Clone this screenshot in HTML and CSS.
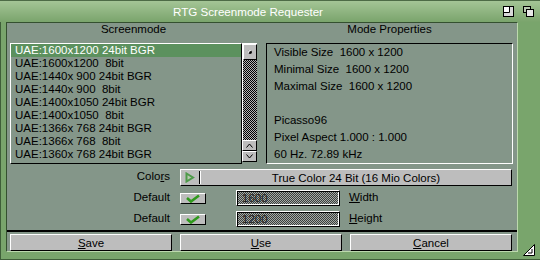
FILE: index.html
```html
<!DOCTYPE html>
<html lang="en">
<head>
  <meta charset="UTF-8" />
  <title>RTG Screenmode Requester</title>
  <link rel="stylesheet" href="styles.css">
</head>
<body>
  <div class="window">
    <div class="titlebar">
      <div class="title">RTG Screenmode Requester</div>
      <div class="gadgets">
        <svg class="gadget" width="11" height="11" viewBox="0 0 11 11">
          <rect x="0.5" y="0.5" width="10" height="10" fill="#d8d8d8" stroke="#000"/>
          <rect x="1" y="1" width="5" height="5" fill="#fff"/>
          <path d="M6.5 1 V6.5 H1" fill="none" stroke="#000"/>
        </svg>
        <svg class="gadget" width="11" height="11" viewBox="0 0 11 11">
          <rect x="0.5" y="0.5" width="7" height="6" fill="#b8c8b0" stroke="#000"/>
          <rect x="3.5" y="3.5" width="7" height="7" fill="#e8e8e8" stroke="#000"/>
        </svg>
      </div>
    </div>

    <div class="body">
      <div class="panes">
        <div class="pane">
          <div class="pane-title">Screenmode</div>
          <div class="listview">
            <ul class="list">
              <li class="selected">UAE:1600x1200 24bit BGR</li>
              <li>UAE:1600x1200  8bit</li>
              <li>UAE:1440x 900 24bit BGR</li>
              <li>UAE:1440x 900  8bit</li>
              <li>UAE:1400x1050 24bit BGR</li>
              <li>UAE:1400x1050  8bit</li>
              <li>UAE:1366x 768 24bit BGR</li>
              <li>UAE:1366x 768  8bit</li>
              <li>UAE:1360x 768 24bit BGR</li>
            </ul>
            <div class="scroller">
              <div class="track"><div class="knob"><span class="dot"></span></div></div>
              <div class="arrow">
                <svg width="7" height="5" viewBox="0 0 7 5"><path d="M0.5 4.5 L3.5 1 L6.5 4.5" fill="none" stroke="#000"/></svg>
              </div>
              <div class="arrow">
                <svg width="7" height="5" viewBox="0 0 7 5"><path d="M0.5 0.5 L3.5 4 L6.5 0.5" fill="none" stroke="#000"/></svg>
              </div>
            </div>
          </div>
        </div>
        <div class="pane">
          <div class="pane-title">Mode Properties</div>
          <div class="props">Visible Size  1600 x 1200
Minimal Size  1600 x 1200
Maximal Size  1600 x 1200

Picasso96
Pixel Aspect 1.000 : 1.000
60 Hz. 72.89 kHz</div>
        </div>
      </div>

      <div class="form">
        <div class="row row-colors">
          <span class="label">Colo<u>r</u>s</span>
          <div class="cycle">
            <span class="cycle-glyph">
              <svg width="10" height="11" viewBox="0 0 10 11"><path d="M1.5 1.5 L8 5.5 L1.5 9.5 Z" fill="#b8c8b0" stroke="#4f9a4a" stroke-width="2"/></svg>
            </span>
            <span class="cycle-text">True Color 24 Bit (16 Mio Colors)</span>
          </div>
        </div>
        <div class="row">
          <span class="label">Default</span>
          <div class="check">
            <svg width="16" height="9" viewBox="0 0 16 9"><path d="M2 4 L6 7.5 L14 1.5" fill="none" stroke="#2f9a1c" stroke-width="2.6"/></svg>
          </div>
          <div class="field">1600</div>
          <span class="label-after"><u>W</u>idth</span>
        </div>
        <div class="row">
          <span class="label">Default</span>
          <div class="check">
            <svg width="16" height="9" viewBox="0 0 16 9"><path d="M2 4 L6 7.5 L14 1.5" fill="none" stroke="#2f9a1c" stroke-width="2.6"/></svg>
          </div>
          <div class="field">1200</div>
          <span class="label-after"><u>H</u>eight</span>
        </div>
      </div>

      <div class="separator"></div>

      <div class="buttons">
        <button class="btn"><u>S</u>ave</button>
        <button class="btn"><u>U</u>se</button>
        <button class="btn"><u>C</u>ancel</button>
      </div>
    </div>

    <div class="rborder">
      <svg width="12" height="12" viewBox="0 0 12 12">
        <path d="M11.5 0.5 V11.5 H0.5 Z" fill="#fff" stroke="#000"/>
        <path d="M9 5 V9 H5" fill="none" stroke="#000"/>
      </svg>
    </div>
  </div>
</body>
</html>
```

FILE: styles.css
```css
* {
  box-sizing: border-box;
  margin: 0;
  padding: 0;
}
body {
  margin: 0;
  width: 540px;
  height: 260px;
  overflow: hidden;
  font-family: "Liberation Sans", Arial, sans-serif;
  font-size: 11.5px;
  color: #000;
}
.window {
  width: 540px;
  height: 260px;
  display: grid;
  grid-template-columns: 6px 512px 22px;
  grid-template-rows: 22px 230px 8px;
  background: #79a56c;
  box-shadow: inset 1px 0 0 #3f5e39, inset 0 -1px 0 #3f5e39;
}
.titlebar {
  grid-column: 1 / -1;
  display: flex;
  align-items: center;
  background: linear-gradient(#a4c596, #7aa46c);
  border-top: 1px solid #4d6b46;
}
.title {
  flex: 1;
  text-align: center;
  color: #fff;
  font-size: 11.6px;
}
.gadgets {
  width: 44px;
  display: flex;
  gap: 9px;
  padding-left: 7px;
}
.gadget {
  display: block;
}
.body {
  grid-column: 2;
  grid-row: 2;
  background: #849689;
  border-top: 1px solid #34502f;
  border-left: 1px solid #34502f;
  border-right: 1px solid #bcd9ad;
  border-bottom: 1px solid #bcd9ad;
  padding: 0 4px 0 3px;
  display: flex;
  flex-direction: column;
}
.rborder {
  grid-column: 3;
  grid-row: 2 / span 2;
  display: flex;
  align-items: flex-end;
  justify-content: center;
  padding-bottom: 4px;
}
.panes {
  display: grid;
  grid-template-columns: 247px 247px;
  column-gap: 9px;
}
.pane-title {
  text-align: center;
  line-height: 13px;
  margin-bottom: 7px;
}
.listview {
  display: flex;
  height: 121px;
}
.list {
  flex: 1;
  list-style: none;
  border-top: 1px solid #fff;
  border-left: 1px solid #fff;
  border-right: 1px solid #000;
  border-bottom: 1px solid #000;
}
.list li {
  height: 13px;
  line-height: 13px;
  padding-left: 4px;
  white-space: pre;
}
.list li.selected {
  background: #5c915e;
  color: #fff;
}
.scroller {
  width: 15px;
  display: flex;
  flex-direction: column;
  height: 119px;
}
.track {
  flex: 1;
  background: repeating-conic-gradient(#000 0 25%, #b4b4b4 0 50%) 0 0 / 2px 2px;
  border-top: 1px solid #fff;
  border-left: 1px solid #fff;
}
.knob,
.arrow {
  background: #bdbdbd;
  border-top: 1px solid #fff;
  border-left: 1px solid #fff;
  border-right: 1px solid #000;
  border-bottom: 1px solid #000;
}
.knob {
  height: 16px;
  display: flex;
  align-items: center;
  justify-content: center;
}
.dot {
  width: 4px;
  height: 4px;
  background: #000;
  border-radius: 2px;
  box-shadow: 1px 1px 0 #fff inset;
}
.arrow {
  height: 11px;
  display: flex;
  align-items: center;
  justify-content: center;
}
.arrow svg {
  display: block;
}
.props {
  height: 121px;
  border-top: 1px solid #000;
  border-left: 1px solid #000;
  border-right: 1px solid #fff;
  border-bottom: 1px solid #fff;
  padding-left: 7px;
  line-height: 17px;
  white-space: pre;
}
.form {
  margin-top: 5px;
}
.row {
  display: flex;
  align-items: center;
  height: 16px;
  margin-top: 5px;
}
.row-colors {
  height: 17px;
  margin-top: 0;
}
.row-colors + .row {
  margin-top: 4px;
}
.label {
  width: 160px;
  margin-right: 10px;
  text-align: right;
  padding-bottom: 3px;
}
.cycle {
  width: 332px;
  height: 17px;
  display: flex;
  background: #bdbdbd;
  border-top: 1px solid #fff;
  border-left: 1px solid #fff;
  border-right: 1px solid #000;
  border-bottom: 1px solid #000;
}
.cycle-glyph {
  width: 19px;
  display: flex;
  align-items: center;
  padding-left: 4px;
  border-right: 1px solid #000;
  margin: 1px 0;
}
.cycle-text {
  flex: 1;
  text-align: center;
  line-height: 14px;
  border-left: 1px solid #fff;
  margin: 1px 0;
}
.check {
  width: 26px;
  height: 11px;
  margin-right: 30px;
  background: #bdbdbd;
  border-top: 1px solid #fff;
  border-left: 1px solid #fff;
  border-right: 1px solid #000;
  border-bottom: 1px solid #000;
  display: flex;
  align-items: center;
  justify-content: center;
}
.check svg {
  display: block;
}
.field {
  width: 104px;
  height: 16px;
  margin-right: 9px;
  border-top: 1px solid #fff;
  border-left: 1px solid #fff;
  border-right: 1px solid #000;
  border-bottom: 1px solid #000;
  box-shadow: inset 1px 1px 0 #000, inset -1px -1px 0 #fff;
  background: repeating-conic-gradient(#3c3c3c 0 25%, #a3aba5 0 50%) 0 0 / 2px 2px;
  padding-left: 5px;
  line-height: 14px;
  color: #222;
}
.label-after {
  padding-bottom: 3px;
}
.separator {
  height: 2px;
  background: #000;
  margin: 3px -4px 2px -3px;
}
.buttons {
  display: flex;
  gap: 8px;
}
.btn {
  width: 162px;
  height: 17px;
  font: inherit;
  color: #000;
  background: #bdbdbd;
  border-top: 1px solid #fff;
  border-left: 1px solid #fff;
  border-right: 1px solid #000;
  border-bottom: 1px solid #000;
  border-radius: 0;
}
```
